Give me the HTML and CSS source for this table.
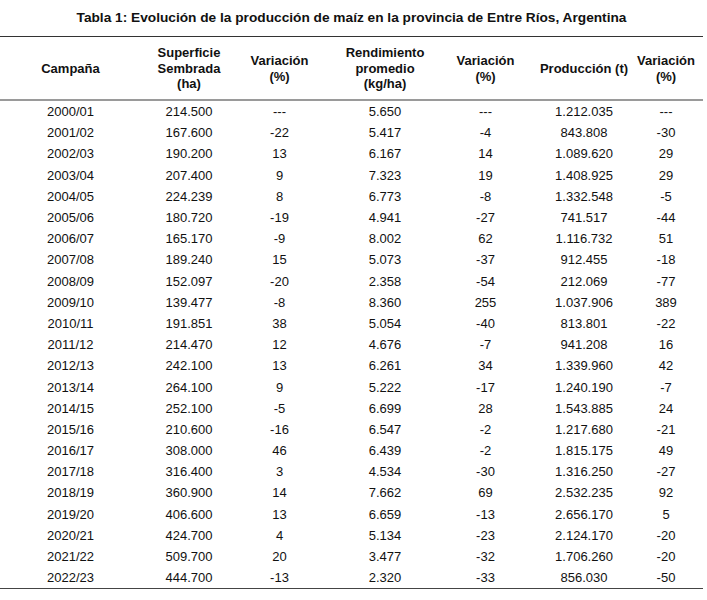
FILE: index.html
```html
<!DOCTYPE html>
<html lang="es">
<head>
<meta charset="utf-8">
<title>Tabla 1</title>
<link rel="stylesheet" href="styles.css">
</head>
<body>
<div class="page">
  <h1 class="title">Tabla 1: Evolución de la producción de maíz en la provincia de Entre Ríos, Argentina</h1>
  <div class="table" role="table">
    <div class="row head" role="row">
      <div class="cell" role="columnheader"><span>Campaña</span></div>
      <div class="cell" role="columnheader"><span>Superficie<br>Sembrada<br>(ha)</span></div>
      <div class="cell" role="columnheader"><span>Variación<br>(%)</span></div>
      <div class="cell" role="columnheader"><span>Rendimiento<br>promedio<br>(kg/ha)</span></div>
      <div class="cell" role="columnheader"><span>Variación<br>(%)</span></div>
      <div class="cell" role="columnheader"><span>Producción (t)</span></div>
      <div class="cell" role="columnheader"><span>Variación<br>(%)</span></div>
    </div>
    <div class="body">
      <div class="row"><div class="cell">2000/01</div><div class="cell">214.500</div><div class="cell">---</div><div class="cell">5.650</div><div class="cell">---</div><div class="cell">1.212.035</div><div class="cell">---</div></div>
      <div class="row"><div class="cell">2001/02</div><div class="cell">167.600</div><div class="cell">-22</div><div class="cell">5.417</div><div class="cell">-4</div><div class="cell">843.808</div><div class="cell">-30</div></div>
      <div class="row"><div class="cell">2002/03</div><div class="cell">190.200</div><div class="cell">13</div><div class="cell">6.167</div><div class="cell">14</div><div class="cell">1.089.620</div><div class="cell">29</div></div>
      <div class="row"><div class="cell">2003/04</div><div class="cell">207.400</div><div class="cell">9</div><div class="cell">7.323</div><div class="cell">19</div><div class="cell">1.408.925</div><div class="cell">29</div></div>
      <div class="row"><div class="cell">2004/05</div><div class="cell">224.239</div><div class="cell">8</div><div class="cell">6.773</div><div class="cell">-8</div><div class="cell">1.332.548</div><div class="cell">-5</div></div>
      <div class="row"><div class="cell">2005/06</div><div class="cell">180.720</div><div class="cell">-19</div><div class="cell">4.941</div><div class="cell">-27</div><div class="cell">741.517</div><div class="cell">-44</div></div>
      <div class="row"><div class="cell">2006/07</div><div class="cell">165.170</div><div class="cell">-9</div><div class="cell">8.002</div><div class="cell">62</div><div class="cell">1.116.732</div><div class="cell">51</div></div>
      <div class="row"><div class="cell">2007/08</div><div class="cell">189.240</div><div class="cell">15</div><div class="cell">5.073</div><div class="cell">-37</div><div class="cell">912.455</div><div class="cell">-18</div></div>
      <div class="row"><div class="cell">2008/09</div><div class="cell">152.097</div><div class="cell">-20</div><div class="cell">2.358</div><div class="cell">-54</div><div class="cell">212.069</div><div class="cell">-77</div></div>
      <div class="row"><div class="cell">2009/10</div><div class="cell">139.477</div><div class="cell">-8</div><div class="cell">8.360</div><div class="cell">255</div><div class="cell">1.037.906</div><div class="cell">389</div></div>
      <div class="row"><div class="cell">2010/11</div><div class="cell">191.851</div><div class="cell">38</div><div class="cell">5.054</div><div class="cell">-40</div><div class="cell">813.801</div><div class="cell">-22</div></div>
      <div class="row"><div class="cell">2011/12</div><div class="cell">214.470</div><div class="cell">12</div><div class="cell">4.676</div><div class="cell">-7</div><div class="cell">941.208</div><div class="cell">16</div></div>
      <div class="row"><div class="cell">2012/13</div><div class="cell">242.100</div><div class="cell">13</div><div class="cell">6.261</div><div class="cell">34</div><div class="cell">1.339.960</div><div class="cell">42</div></div>
      <div class="row"><div class="cell">2013/14</div><div class="cell">264.100</div><div class="cell">9</div><div class="cell">5.222</div><div class="cell">-17</div><div class="cell">1.240.190</div><div class="cell">-7</div></div>
      <div class="row"><div class="cell">2014/15</div><div class="cell">252.100</div><div class="cell">-5</div><div class="cell">6.699</div><div class="cell">28</div><div class="cell">1.543.885</div><div class="cell">24</div></div>
      <div class="row"><div class="cell">2015/16</div><div class="cell">210.600</div><div class="cell">-16</div><div class="cell">6.547</div><div class="cell">-2</div><div class="cell">1.217.680</div><div class="cell">-21</div></div>
      <div class="row"><div class="cell">2016/17</div><div class="cell">308.000</div><div class="cell">46</div><div class="cell">6.439</div><div class="cell">-2</div><div class="cell">1.815.175</div><div class="cell">49</div></div>
      <div class="row"><div class="cell">2017/18</div><div class="cell">316.400</div><div class="cell">3</div><div class="cell">4.534</div><div class="cell">-30</div><div class="cell">1.316.250</div><div class="cell">-27</div></div>
      <div class="row"><div class="cell">2018/19</div><div class="cell">360.900</div><div class="cell">14</div><div class="cell">7.662</div><div class="cell">69</div><div class="cell">2.532.235</div><div class="cell">92</div></div>
      <div class="row"><div class="cell">2019/20</div><div class="cell">406.600</div><div class="cell">13</div><div class="cell">6.659</div><div class="cell">-13</div><div class="cell">2.656.170</div><div class="cell">5</div></div>
      <div class="row"><div class="cell">2020/21</div><div class="cell">424.700</div><div class="cell">4</div><div class="cell">5.134</div><div class="cell">-23</div><div class="cell">2.124.170</div><div class="cell">-20</div></div>
      <div class="row"><div class="cell">2021/22</div><div class="cell">509.700</div><div class="cell">20</div><div class="cell">3.477</div><div class="cell">-32</div><div class="cell">1.706.260</div><div class="cell">-20</div></div>
      <div class="row"><div class="cell">2022/23</div><div class="cell">444.700</div><div class="cell">-13</div><div class="cell">2.320</div><div class="cell">-33</div><div class="cell">856.030</div><div class="cell">-50</div></div>
    </div>
  </div>
</div>
</body>
</html>
```

FILE: styles.css
```css
html, body {
  margin: 0;
  padding: 0;
  background: #ffffff;
}

body {
  font-family: "Liberation Sans", Arial, sans-serif;
  color: #111111;
}

.page {
  padding: 10px 4px 0 0;
}

.title {
  margin: 0 0 10px 0;
  font-size: 13.7px;
  font-weight: bold;
  line-height: 16px;
  text-align: center;
}

.table {
  width: 703px;
  font-size: 13px;
  border-top: 1.5px solid #333333;
  border-bottom: 1.5px solid #444444;
}

.row {
  display: grid;
  grid-template-columns: 141px 96px 85px 126px 75px 122px 42px;
  padding-right: 16px;
  height: 21.2px;
}

.row.head {
  height: 62px;
  border-bottom: 2px solid #9a9a9a;
}

.cell {
  display: flex;
  align-items: center;
  justify-content: center;
  white-space: nowrap;
  line-height: 15px;
}

.head .cell {
  font-weight: bold;
  line-height: 15.5px;
  text-align: center;
  padding-top: 1px;
}
```
